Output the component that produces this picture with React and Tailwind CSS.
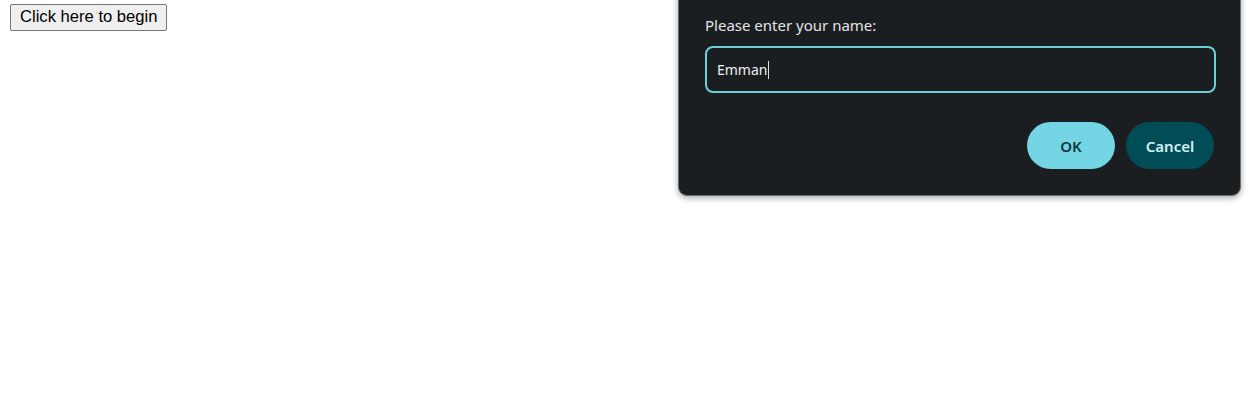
export default function App() {
  return (
    <div className="relative w-[1260px] h-[416px] bg-white overflow-hidden">
      <button className="ml-[10px] mt-[4px] h-[27px] px-[9px] border border-[#767676] rounded-[2px] bg-[#efefef] text-[16.6px] text-black font-['Liberation_Sans',Arial,sans-serif]">
        Click here to begin
      </button>

      <div className="absolute left-[678px] top-[-10px] w-[563px] h-[206px] bg-[#1a1e21] border border-[#6b6e70] rounded-b-[9px] shadow-[0_2px_6px_rgba(0,0,0,0.35)] font-['Noto_Sans',sans-serif]">
        <div className="pt-[24px] px-[26px]">
          <div className="text-[15px] text-[#e3e3e3] leading-[20px]">Please enter your name:</div>
          <div className="mt-[11px] h-[47px] w-[511px] border-2 border-[#6ccfdc] rounded-[8px] flex items-center px-[10px] text-[14px] text-[#f0f0f0]">
            Emman<span className="inline-block w-px h-[18px] bg-[#e0e0e0] ml-px" />
          </div>
          <div className="mt-[29px] flex justify-end gap-[11px]">
            <button className="w-[88px] h-[47px] pt-[2px] rounded-full bg-[#74d5e4] text-[#0d3a42] text-[15px] font-semibold">
              OK
            </button>
            <button className="w-[88px] h-[47px] pt-[2px] rounded-full bg-[#014d57] text-[#d4f1f5] text-[15px] font-semibold">
              Cancel
            </button>
          </div>
        </div>
      </div>
    </div>
  );
}
